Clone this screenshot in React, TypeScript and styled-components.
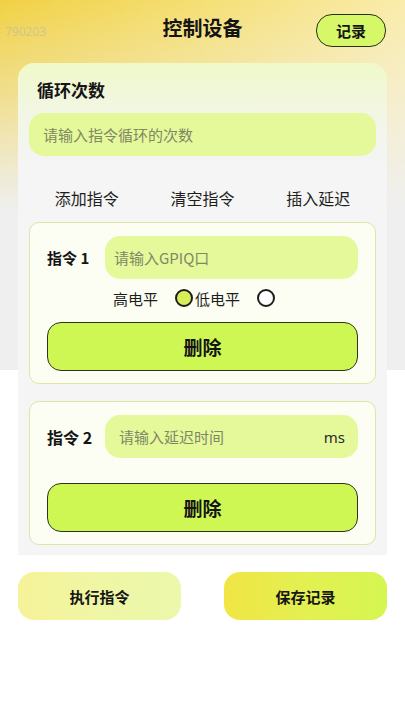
import React from 'react';
import styled, { createGlobalStyle } from 'styled-components';

const GlobalStyle = createGlobalStyle`
  * {
    box-sizing: border-box;
  }

  body {
    margin: 0;
    background: #fff;
    font-family: "Noto Sans CJK SC", "Noto Sans", sans-serif;
    color: #1a1a1a;
  }
`;

const Page = styled.div`
  width: 405px;
  min-height: 720px;
  background:
    linear-gradient(180deg, rgba(239, 239, 239, 0) 0, rgba(239, 239, 239, 0.4) 90px, #efefef 210px) 0 0 / 100% 370px no-repeat,
    linear-gradient(105deg, #f1d143 0%, #f5df74 40%, #fcf2c6 100%) 0 0 / 100% 370px no-repeat,
    #fff;
`;

const Header = styled.header`
  position: relative;
  height: 63px;
  display: flex;
  align-items: flex-start;
  justify-content: center;
  padding-top: 13px;
`;

const Title = styled.h1`
  margin: 0;
  font-size: 20px;
  line-height: 30px;
  font-weight: 700;
  color: #141414;
`;

const Watermark = styled.span`
  position: absolute;
  left: 5px;
  top: 23px;
  font-size: 12px;
  color: rgba(180, 180, 180, 0.55);
  font-family: "Noto Sans", sans-serif;
`;

const RecordButton = styled.button`
  position: absolute;
  right: 19px;
  top: 14px;
  width: 70px;
  height: 33px;
  border: 1.5px solid #2b2f1c;
  border-radius: 16px;
  background: #d6f768;
  font-family: inherit;
  font-size: 15px;
  font-weight: 700;
  color: #141414;
  padding: 0;
`;

const MainCard = styled.section`
  margin: 0 18px;
  padding: 0 11px 10px;
  border-radius: 16px 16px 0 0;
  background: linear-gradient(180deg, #f0f9c9 0, #f2f6e4 50px, #f4f5f4 100px, #f4f5f4 100%);
`;

const SectionTitle = styled.h2`
  margin: 0;
  padding: 15px 8px 0;
  font-size: 17px;
  line-height: 24px;
  font-weight: 700;
  color: #151515;
`;

const Field = styled.label<{ $indent?: number }>`
  flex: 1;
  display: flex;
  align-items: center;
  height: 43px;
  padding: 0 13px 0 ${(p) => p.$indent ?? 14}px;
  border-radius: 15px;
  background: #e5f99b;
`;

const FieldInput = styled.input`
  flex: 1;
  min-width: 0;
  border: none;
  outline: none;
  background: transparent;
  padding: 0;
  font-family: "Noto Sans CJK SC", "Noto Sans", sans-serif;
  font-size: 15px;
  color: #333;

  &::placeholder {
    color: #7f8865;
  }
`;

const Unit = styled.span`
  font-family: "Noto Sans", sans-serif;
  font-size: 15px;
  color: #2a2a2a;
`;

const LoopField = styled(Field)`
  margin-top: 11px;
`;

const ActionRow = styled.div`
  display: grid;
  grid-template-columns: repeat(3, 1fr);
  height: 40px;
  margin-top: 22px;
  align-items: center;
`;

const TextAction = styled.button`
  border: none;
  background: none;
  padding: 0;
  font-family: inherit;
  font-size: 16px;
  color: #1e1e1e;
`;

const CommandCard = styled.div<{ $top: number }>`
  margin-top: ${(p) => p.$top}px;
  padding: 13px 17px 12px;
  border: 1.5px solid #dbe7a3;
  border-radius: 10px;
  background: #fcfdf3;
`;

const CommandRow = styled.div`
  display: flex;
  align-items: center;
`;

const CommandLabel = styled.span<{ $size: number }>`
  width: 58px;
  font-size: ${(p) => p.$size}px;
  font-weight: 700;
  color: #141414;
  white-space: nowrap;
`;

const LevelRow = styled.div`
  display: flex;
  align-items: center;
  height: 22px;
  margin-top: 8px;
  padding-left: 66px;
  font-size: 15px;
  color: #1e1e1e;
`;

const LevelText = styled.span`
  margin-right: 17px;
`;

const Radio = styled.span<{ $checked?: boolean }>`
  width: 18px;
  height: 18px;
  border: 2px solid #1c1c1c;
  border-radius: 50%;
  background: ${(p) => (p.$checked ? '#d8ee59' : '#fff')};
  margin-right: 2px;
`;

const DeleteButton = styled.button<{ $top: number }>`
  display: block;
  width: 100%;
  height: 49px;
  margin-top: ${(p) => p.$top}px;
  border: 1.5px solid #2e3320;
  border-radius: 14px;
  background: #cff754;
  font-family: inherit;
  font-size: 19px;
  font-weight: 700;
  color: #141414;
`;

const Footer = styled.div`
  display: flex;
  justify-content: space-between;
  margin: 17px 18px 0;
`;

const FooterButton = styled.button<{ $primary?: boolean }>`
  width: 163px;
  height: 48px;
  border: none;
  border-radius: 16px;
  background: ${(p) =>
    p.$primary
      ? 'linear-gradient(90deg, #f0e544 0%, #e3f052 50%, #d5f650 100%)'
      : 'linear-gradient(90deg, #f6f399 0%, #eff6a4 50%, #ecf8ac 100%)'};
  font-family: inherit;
  font-size: 15px;
  font-weight: 700;
  color: #161616;
`;

export default function App() {
  return (
    <Page>
      <GlobalStyle />
      <Header>
        <Watermark>790203</Watermark>
        <Title>控制设备</Title>
        <RecordButton>记录</RecordButton>
      </Header>

      <MainCard>
        <SectionTitle>循环次数</SectionTitle>
        <LoopField>
          <FieldInput placeholder="请输入指令循环的次数" />
        </LoopField>

        <ActionRow>
          <TextAction>添加指令</TextAction>
          <TextAction>清空指令</TextAction>
          <TextAction>插入延迟</TextAction>
        </ActionRow>

        <CommandCard $top={4}>
          <CommandRow>
            <CommandLabel $size={15}>指令 1</CommandLabel>
            <Field $indent={9}>
              <FieldInput placeholder="请输入GPIQ口" />
            </Field>
          </CommandRow>
          <LevelRow>
            <LevelText>高电平</LevelText>
            <Radio $checked />
            <LevelText>低电平</LevelText>
            <Radio />
          </LevelRow>
          <DeleteButton $top={13}>删除</DeleteButton>
        </CommandCard>

        <CommandCard $top={17}>
          <CommandRow>
            <CommandLabel $size={16}>指令 2</CommandLabel>
            <Field>
              <FieldInput placeholder="请输入延迟时间" />
              <Unit>ms</Unit>
            </Field>
          </CommandRow>
          <DeleteButton $top={25}>删除</DeleteButton>
        </CommandCard>
      </MainCard>

      <Footer>
        <FooterButton>执行指令</FooterButton>
        <FooterButton $primary>保存记录</FooterButton>
      </Footer>
    </Page>
  );
}
